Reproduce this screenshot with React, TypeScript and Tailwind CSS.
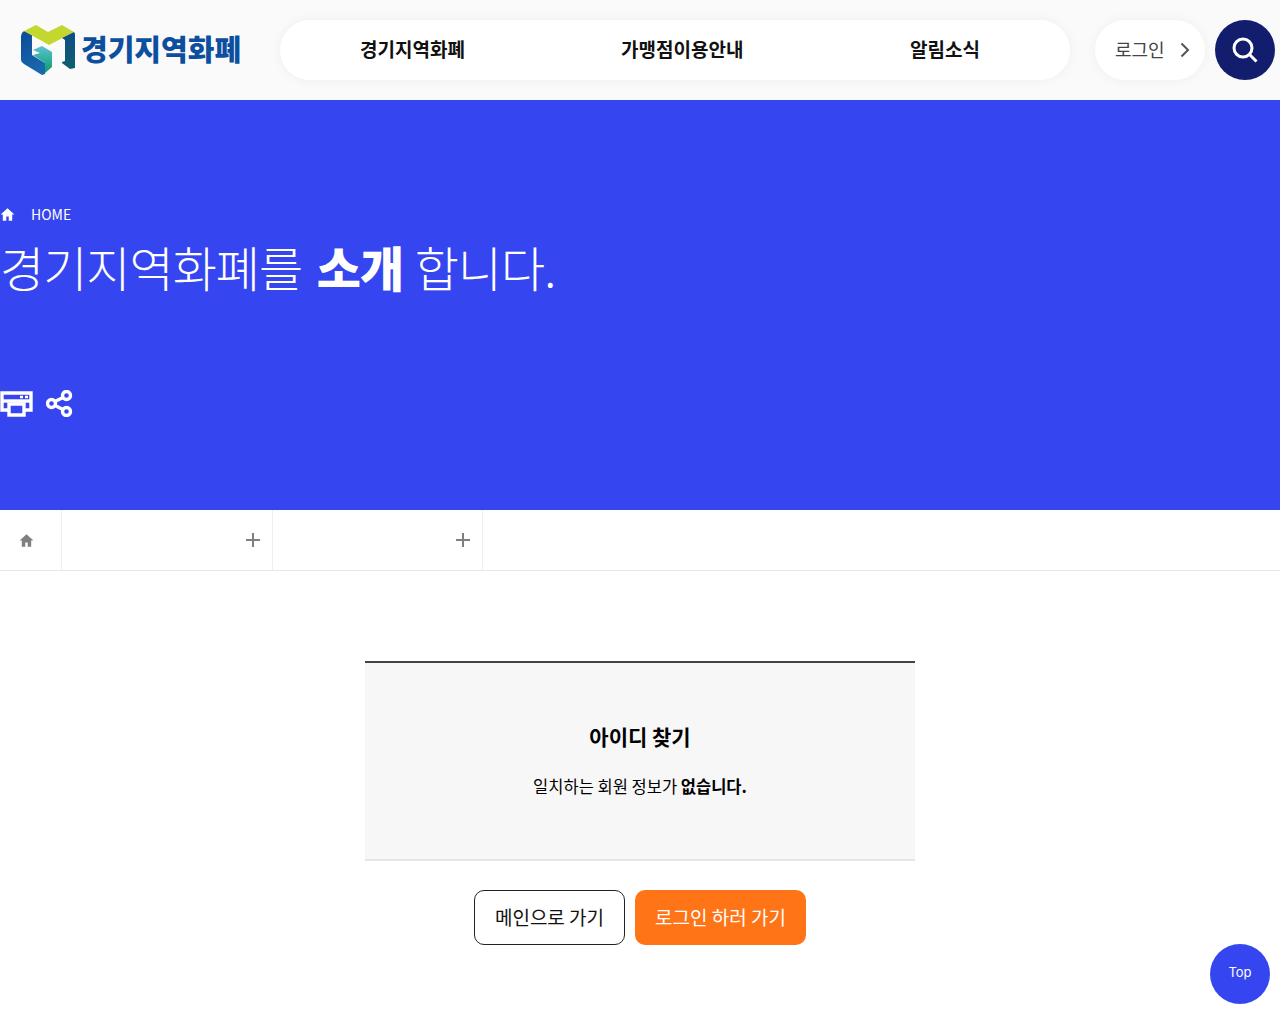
const KR = { fontFamily: '"Noto Sans CJK KR", "Noto Sans", sans-serif' };

function Logo() {
  return (
    <svg width="56" height="51" viewBox="0 0 56 51" className="shrink-0">
      <defs>
        <linearGradient id="lb" x1="0" y1="0" x2="0.4" y2="1">
          <stop offset="0" stopColor="#0f4a96" />
          <stop offset="1" stopColor="#1768ad" />
        </linearGradient>
        <linearGradient id="tl" x1="0.5" y1="0" x2="0.5" y2="1">
          <stop offset="0" stopColor="#5ec1d2" />
          <stop offset="0.55" stopColor="#2cae9a" />
          <stop offset="1" stopColor="#0e9a62" />
        </linearGradient>
        <linearGradient id="rd" x1="0" y1="0" x2="0" y2="1">
          <stop offset="0" stopColor="#0d4c86" />
          <stop offset="1" stopColor="#0f5f6e" />
        </linearGradient>
      </defs>
      <path d="M1 11 Q1 8 4 6 L12 10 V30 L25 38 V49 L22 50 L4 39 Q1 37 1 35 Z" fill="url(#lb)" />
      <path d="M4 6 L16 0 L28 7 L42 0 L54 7 L29 20 Z" fill="#c4d72e" />
      <path d="M13 25 L22 21 L32 27 V42 L25 48 V38 L13 30 L20 28 Z" fill="url(#tl)" />
      <path d="M42 13 L54 7 Q55 8 55 10 V43 L50 44 L42 38 V37 L45 36 V15 Z" fill="url(#rd)" />
    </svg>
  );
}

function HomeIcon({ size, color }: { size: number; color: string }) {
  return (
    <svg width={size} height={size} viewBox="0 0 24 24" fill={color}>
      <path d="M12 2 L1 12 H4.5 V22 H10 V15 H14 V22 H19.5 V12 H23 Z" />
    </svg>
  );
}

function Plus() {
  return (
    <svg width="16" height="16" viewBox="0 0 16 16" className="absolute right-[1px] top-[22px]" stroke="#808080" strokeWidth="2">
      <path d="M1 8 H15 M8 1 V15" />
    </svg>
  );
}

export default function App() {
  return (
    <div className="w-[1280px] h-[1024px] overflow-hidden bg-white relative" style={KR}>
      <header className="h-[100px] bg-[#fafafa] flex items-center">
        <div className="w-[280px] shrink-0 flex items-center pl-5 gap-[5px]">
          <Logo />
          <span className="text-[29px] leading-none font-black tracking-[0px] text-[#0c4f9f] whitespace-nowrap -mt-[3px]">경기지역화폐</span>
        </div>
        <nav className="w-[790px] h-[60px] rounded-[30px] bg-white shadow-[0_0_12px_rgba(0,0,0,0.05)] flex items-center text-[19px] leading-[58px] font-bold text-[#111]">
          <span className="ml-[80px] w-[261px] -mt-[2px]">경기지역화폐</span>
          <span className="w-[289px] -mt-[2px]">가맹점이용안내</span>
          <span className="-mt-[2px]">알림소식</span>
        </nav>
        <div className="ml-[25px] w-[110px] h-[60px] rounded-[30px] bg-white shadow-[0_0_12px_rgba(0,0,0,0.05)] flex items-center pl-5 text-[18px] text-[#444]">
          <span className="-mt-[2px]">로그인</span>
          <svg width="12" height="18" viewBox="0 0 12 18" fill="none" stroke="#555" strokeWidth="2" className="ml-[14px]">
            <path d="M2.5 2.5 L9 9 L2.5 15.5" />
          </svg>
        </div>
        <div className="ml-[10px] w-[60px] h-[60px] rounded-full bg-[#131d6e] flex items-center justify-center">
          <svg width="28" height="28" viewBox="0 0 28 28" fill="none" stroke="white">
            <circle cx="12" cy="12" r="9" strokeWidth="3" />
            <path d="M18.5 18.5 L25.5 25.5" strokeWidth="3" />
          </svg>
        </div>
      </header>

      <section className="h-[410px] bg-[#3545f0] text-white pt-[104px]">
        <div className="h-[20px] flex items-center gap-4 text-[14px] leading-5">
          <HomeIcon size={15} color="white" />
          <span>HOME</span>
        </div>
        <h1 className="mt-[7px] text-[48px] leading-[70px] font-light tracking-[-1px] [word-spacing:5px] whitespace-nowrap">
          경기지역화폐를 <b className="font-black mr-[-3px]">소개</b> 합니다.
        </h1>
        <div className="mt-[89px] flex items-center gap-[13px]">
          <svg width="33" height="27" viewBox="0 0 33 27" fill="none" stroke="white" strokeWidth="3.4">
            <path d="M9 20 H2 V3 H31 V20 H24" />
            <path d="M2 11 H31" />
            <path d="M9 14 H24 V25 H9 Z" fill="#3545f0" />
            <path d="M20 7 H23 M25 7 H28" strokeWidth="2.5" />
          </svg>
          <svg width="27" height="27" viewBox="0 0 27 27" fill="none" stroke="white" strokeWidth="3.4">
            <circle cx="5.5" cy="13.5" r="4" />
            <circle cx="20.5" cy="5.5" r="4" />
            <circle cx="20.5" cy="21.5" r="4" />
            <path d="M9 11.5 L17 7.5 M9 15.5 L17 19.5" />
          </svg>
        </div>
      </section>

      <div className="h-[61px] border-b border-[#e8e8e8] flex">
        <div className="w-[62px] h-[60px] border-r border-[#eeeeee] flex items-center justify-center pr-[8px]">
          <HomeIcon size={15} color="#808080" />
        </div>
        <div className="w-[211px] h-[60px] border-r border-[#eeeeee] pr-[10px]">
          <div className="relative h-full"><Plus /></div>
        </div>
        <div className="w-[210px] h-[60px] border-r border-[#eeeeee] pr-[10px]">
          <div className="relative h-full"><Plus /></div>
        </div>
      </div>

      <main className="pt-[90px] flex flex-col items-center">
        <div className="w-[550px] h-[200px] bg-[#f7f7f7] border-t-2 border-b-2 border-t-[#444] border-b-[#e5e5e5] flex flex-col items-center">
          <h2 className="mt-[58px] text-[21px] leading-[30px] font-bold text-black">아이디 찾기</h2>
          <p className="mt-[23px] text-[16.5px] leading-6 text-black">
            일치하는 회원 정보가 <b className="font-bold">없습니다.</b>
          </p>
        </div>
        <div className="mt-[29px] flex gap-[10px]">
          <button className="w-[151px] h-[55px] rounded-[10px] border border-[#222] bg-white text-[19px] text-[#111]">메인으로 가기</button>
          <button className="w-[171px] h-[55px] rounded-[10px] bg-[#ff7417] text-[19px] text-white">로그인 하러 가기</button>
        </div>
      </main>

      <button className="absolute left-[1210px] top-[944px] w-[60px] h-[60px] rounded-full bg-[#3545f0] text-white text-[13px] font-normal pb-[3px]" style={{ fontFamily: 'Inter, sans-serif' }}>Top</button>
    </div>
  );
}
